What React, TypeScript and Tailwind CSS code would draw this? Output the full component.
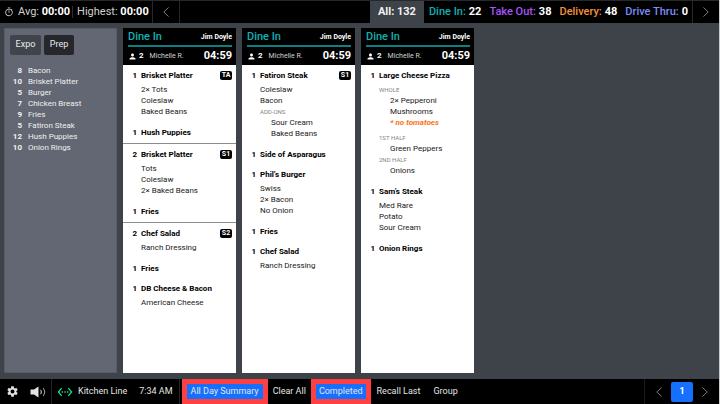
import clsx from "clsx"
import { MdOutlineTimer, MdPerson, MdSettings, MdSettingsEthernet } from "react-icons/md"

type Mod = { kind?: "label" | "sub" | "note"; text: string }
type Item = { qty: number; name: string; tag?: string; mods?: Mod[] }
type Course = Item[]

const mods = (...names: string[]): Mod[] => names.map((text) => ({ text }))

const tickets: Course[][] = [
	[
		[
			{ qty: 1, name: "Brisket Platter", tag: "TA", mods: mods("2× Tots", "Coleslaw", "Baked Beans") },
			{ qty: 1, name: "Hush Puppies" },
		],
		[
			{ qty: 2, name: "Brisket Platter", tag: "S1", mods: mods("Tots", "Coleslaw", "2× Baked Beans") },
			{ qty: 1, name: "Fries" },
		],
		[
			{ qty: 2, name: "Chef Salad", tag: "S2", mods: mods("Ranch Dressing") },
			{ qty: 1, name: "Fries" },
			{ qty: 1, name: "DB Cheese & Bacon", mods: mods("American Cheese") },
		],
	],
	[
		[
			{
				qty: 1,
				name: "Fatiron Steak",
				tag: "S1",
				mods: [
					{ text: "Coleslaw" },
					{ text: "Bacon" },
					{ kind: "label", text: "ADD-ONS" },
					{ kind: "sub", text: "Sour Cream" },
					{ kind: "sub", text: "Baked Beans" },
				],
			},
			{ qty: 1, name: "Side of Asparagus" },
			{ qty: 1, name: "Phil’s Burger", mods: mods("Swiss", "2× Bacon", "No Onion") },
			{ qty: 1, name: "Fries" },
			{ qty: 1, name: "Chef Salad", mods: mods("Ranch Dressing") },
		],
	],
	[
		[
			{
				qty: 1,
				name: "Large Cheese Pizza",
				mods: [
					{ kind: "label", text: "WHOLE" },
					{ kind: "sub", text: "2× Pepperoni" },
					{ kind: "sub", text: "Mushrooms" },
					{ kind: "note", text: "* no tomatoes" },
					{ kind: "label", text: "1ST HALF" },
					{ kind: "sub", text: "Green Peppers" },
					{ kind: "label", text: "2ND HALF" },
					{ kind: "sub", text: "Onions" },
				],
			},
			{ qty: 1, name: "Sam’s Steak", mods: mods("Med Rare", "Potato", "Sour Cream") },
			{ qty: 1, name: "Onion Rings" },
		],
	],
]

const summary = [
	{ qty: 8, name: "Bacon" },
	{ qty: 10, name: "Brisket Platter" },
	{ qty: 5, name: "Burger" },
	{ qty: 7, name: "Chicken Breast" },
	{ qty: 9, name: "Fries" },
	{ qty: 5, name: "Fatiron Steak" },
	{ qty: 12, name: "Hush Puppies" },
	{ qty: 10, name: "Onion Rings" },
]

const orderTypes = [
	{ name: "Dine In:", count: 22, color: "text-[#10b0b4]" },
	{ name: "Take Out:", count: 38, color: "text-[#a855f7]" },
	{ name: "Delivery:", count: 48, color: "text-[#f5933a]" },
	{ name: "Drive Thru:", count: 0, color: "text-[#7c8cf8]" },
]

function Chevron({ dir }: { dir: "left" | "right" }) {
	return (
		<svg viewBox="0 0 6 10" className="h-[10px] w-[6px]" fill="none" stroke="#7b7e82" strokeWidth="1">
			<path d={dir === "left" ? "M5.5 .5 .8 5l4.7 4.5" : "M.5 .5 5.2 5 .5 9.5"} />
		</svg>
	)
}

function Speaker() {
	return (
		<svg viewBox="0 0 16 12" className="h-3 w-4" fill="none" stroke="#e4e4e4" strokeWidth="1">
			<path d="M.5 3.5H4L8.5 .5v11L4 8.500H.5z" fill="#e4e4e4" stroke="none" />
			<path d="M10.500 3.800c1.100 1.300 1.100 3.100 0 4.400" />
			<path d="M13 2c2.200 2.400 2.200 5.600 0 8" stroke="#a8a8a8" />
		</svg>
	)
}

function TopBar() {
	return (
		<header className="flex h-[23px] shrink-0 items-stretch border-t border-[#26282b] bg-black text-[11px] leading-[22px] text-[#d0d0d0]">
			<div className="flex items-center pl-1">
				<MdOutlineTimer className="mr-1 size-[10px]" />
				<span>Avg: <b className="font-bold text-white">00:00</b></span>
				<span className="mr-1 ml-[2px] h-3 w-px bg-[#2b2d30]" />
				<span>Highest: <b className="font-bold text-white">00:00</b></span>
			</div>
			<button aria-label="Previous order types" className="ml-[3px] flex w-7 items-center justify-center border-x border-[#26282b]">
				<Chevron dir="left" />
			</button>
			<nav className="ml-auto flex">
				<button className="bg-[#3e4249] px-2 font-bold text-[#f2f2f2]">All: 132</button>
				<div className="flex gap-2 pr-1 pl-[5px]">
					{orderTypes.map((t) => (
						<button key={t.name} className={clsx("flex gap-[3px] font-medium", t.color)}>
							{t.name} <b className="font-bold text-white">{t.count}</b>
						</button>
					))}
				</div>
			</nav>
			<button aria-label="Next order types" className="flex w-[27px] items-center justify-center border-l border-[#26282b]">
				<Chevron dir="right" />
			</button>
		</header>
	)
}

function Summary() {
	return (
		<aside className="w-[113px] shrink-0 border border-[#565b66] bg-[#626773] px-[5px] py-[6px]">
			<div className="flex gap-[3px] text-[9px] text-[#ececec]">
				<button className="h-5 w-[31px] rounded-[2px] bg-[#40444b]">Expo</button>
				<button className="h-5 w-[30px] rounded-[2px] bg-[#25272a]">Prep</button>
			</div>
			<ul className="mt-[10px] text-[8px] leading-[11px] text-[#f0f0f0]">
				{summary.map((s) => (
					<li key={s.name} className="flex gap-[6px]">
						<span className="w-3 text-right font-bold">{s.qty}</span>
						<span>{s.name}</span>
					</li>
				))}
			</ul>
		</aside>
	)
}

function TicketItem({ item }: { item: Item }) {
	return (
		<li>
			<div className="flex items-center font-bold text-black">
				<span className="w-[14px] text-right">{item.qty}</span>
				<span className="ml-1">{item.name}</span>
				{item.tag && (
					<span className="mr-1 ml-auto h-[9px] w-3 rounded-[2px] bg-black text-center text-[7px] leading-[9px] text-white">
						{item.tag}
					</span>
				)}
			</div>
			{item.mods && (
				<ul className="mt-[3px] mb-px ml-[18px]">
					{item.mods.map((m) => (
						<li
							key={m.text}
							className={clsx(
								m.kind === "label" && "text-[6px] text-[#858585]",
								m.kind === "sub" && "ml-[11px]",
								m.kind === "note" && "mb-1 ml-[11px] font-bold text-[#f97316] italic",
							)}
						>
							{m.text}
						</li>
					))}
				</ul>
			)}
		</li>
	)
}

function Ticket({ courses }: { courses: Course[] }) {
	return (
		<article className="flex w-[113px] shrink-0 flex-col bg-white">
			<header className="bg-black pr-1 pl-[5px] text-white">
				<div className="flex h-[19px] items-center justify-between border-b-2 border-[#0b7f82] pt-[2px]">
					<h2 className="text-[11px] font-medium text-[#10b0b4]">Dine In</h2>
					<span className="text-[7px] font-bold">Jim Doyle</span>
				</div>
				<div className="flex h-[18px] items-center">
					<MdPerson className="size-[9px]" />
					<span className="ml-[2px] text-[8px] font-bold">2</span>
					<span className="ml-[6px] text-[7px] text-[#d0d0d0]">Michelle R.</span>
					<time className="ml-auto text-[11px] font-bold">04:59</time>
				</div>
			</header>
			<div className="divide-y divide-[#8c8c8c] text-[8px] leading-[11px] text-[#1a1a1a]">
				{courses.map((course, i) => (
					<ul key={i} className="flex flex-col gap-[9px] py-[5px]">
						{course.map((item) => (
							<TicketItem key={item.name} item={item} />
						))}
					</ul>
				))}
			</div>
		</article>
	)
}

function BottomBar() {
	return (
		<footer className="flex h-[25px] shrink-0 items-stretch bg-black text-[9px] text-[#e4e4e4]">
			<button aria-label="Settings" className="pl-[6px]">
				<MdSettings className="size-[13px]" />
			</button>
			<button aria-label="Sound" className="pr-[5px] pl-[11px]">
				<Speaker />
			</button>
			<div className="flex items-center border-x border-[#222426] pr-[6px] pl-[5px]">
				<MdSettingsEthernet className="size-4 text-[#1fe08f]" />
				<span className="ml-[5px]">Kitchen Line</span>
				<span className="ml-3">7:34 AM</span>
			</div>
			<button className="ml-[2px] border-[5px] border-[#ff4043] bg-[#1570ff] px-1">All Day Summary</button>
			<button className="px-[5px]">Clear All</button>
			<button className="border-[5px] border-[#ff4043] bg-[#1570ff] px-[3px]">Completed</button>
			<button className="px-[6px]">Recall Last</button>
			<button className="px-[7px]">Group</button>
			<div className="ml-auto flex items-center gap-[9px] border-l border-[#1b1c1e] px-[11px]">
				<button aria-label="Previous page">
					<Chevron dir="left" />
				</button>
				<button className="h-5 w-[22px] rounded-[2px] bg-[#1570ff] font-bold text-white">1</button>
				<button aria-label="Next page">
					<Chevron dir="right" />
				</button>
			</div>
		</footer>
	)
}

export default function App() {
	return (
		<div className="flex min-h-screen flex-col border-r border-[#c9cacb] bg-[#3e4249] font-['Roboto',sans-serif]">
			<TopBar />
			<main className="flex grow gap-[6px] px-1 pt-[5px] pb-[6px]">
				<Summary />
				{tickets.map((courses, i) => (
					<Ticket key={i} courses={courses} />
				))}
			</main>
			<BottomBar />
		</div>
	)
}
